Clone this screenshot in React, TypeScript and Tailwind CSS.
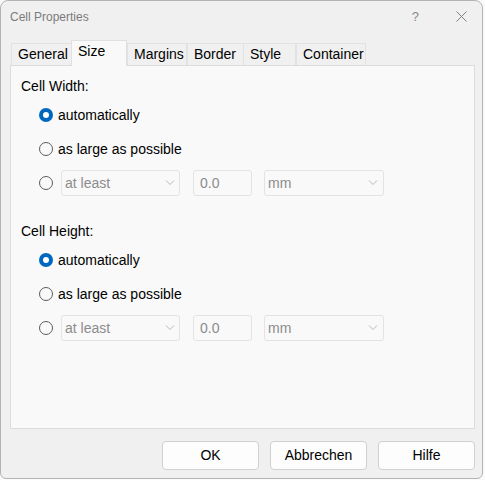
import { useState } from "react";

// Cell Properties dialog, "Size" tab

const tabs = [
  { name: "General", w: "w-[60px]" },
  { name: "Size", w: "w-[56px]" },
  { name: "Margins", w: "w-[60px]" },
  { name: "Border", w: "w-[56px]" },
  { name: "Style", w: "w-[53px]" },
  { name: "Container", w: "w-[70px]" },
];

function Radio({ checked, onClick }: { checked: boolean; onClick: () => void }) {
  return (
    <button
      onClick={onClick}
      className={`w-[14px] h-[14px] rounded-full shrink-0 flex items-center justify-center ${
        checked ? "bg-[#0067c0]" : "border border-[#5c5c5c] bg-[#f9f9f9]"
      }`}
    >
      {checked && <span className="w-[6px] h-[6px] rounded-full bg-white" />}
    </button>
  );
}

function Chevron() {
  return (
    <svg width="10" height="6" viewBox="0 0 10 6" fill="none" stroke="#b8b8b8" strokeWidth="1">
      <path d="M1 0.5 L5 4.5 L9 0.5" />
    </svg>
  );
}

function SizeGroup({ title }: { title: string }) {
  const [mode, setMode] = useState(0);
  return (
    <div className="flex flex-col">
      <div className="h-[20px] flex items-center pl-[10px] text-[14px] text-black">{title}</div>
      <div className="mt-[2px] flex flex-col pl-[28px]">
        <div className="h-[34px] flex items-center gap-[5px]">
          <Radio checked={mode === 0} onClick={() => setMode(0)} />
          <span>automatically</span>
        </div>
        <div className="h-[34px] flex items-center gap-[5px]">
          <Radio checked={mode === 1} onClick={() => setMode(1)} />
          <span>as large as possible</span>
        </div>
        <div className="h-[34px] flex items-center">
          <Radio checked={mode === 2} onClick={() => setMode(2)} />
          <div className="ml-[8px] w-[119px] h-[26px] border border-[#e3e3e3] rounded-[3px] bg-[#f9f9f9] flex items-center justify-between pl-[3px] pr-[4px] text-[#8c8c8c]">
            <span>at least</span>
            <Chevron />
          </div>
          <div className="ml-[13px] w-[59px] h-[26px] border border-[#e3e3e3] rounded-[3px] bg-[#f9f9f9] flex items-center pl-[6px] text-[#8c8c8c]">
            0.0
          </div>
          <div className="ml-[12px] w-[120px] h-[26px] border border-[#e3e3e3] rounded-[3px] bg-[#f9f9f9] flex items-center justify-between pl-[3px] pr-[5px] text-[#8c8c8c]">
            <span>mm</span>
            <Chevron />
          </div>
        </div>
      </div>
    </div>
  );
}

export default function App() {
  const [active, setActive] = useState("Size");

  return (
    <div className="w-[485px] h-[480px] bg-[#fafafa] font-['Liberation_Sans',Arial,sans-serif] text-[14px] text-black">
      <div className="w-[483px] h-[479px] rounded-t-[8px] rounded-b-[6px] border border-[#b4b4b4] bg-[#f0f0f0] flex flex-col">
        {/* Title bar */}
        <div className="h-[31px] flex items-center pl-[9px] text-[12px] text-[#7b7b7b]">
          <span>Cell Properties</span>
          <span className="ml-auto mr-[37px] text-[13px] text-[#8a8a8a]">?</span>
          <svg width="11" height="11" viewBox="0 0 11 11" stroke="#808080" strokeWidth="1" className="mr-[15px]">
            <path d="M0.5 0.5 L10.5 10.5 M10.5 0.5 L0.5 10.5" />
          </svg>
        </div>

        <div className="pl-[9px] pr-[7px] flex flex-col">
          {/* Tab strip */}
          <div className="mt-[8px] h-[25px] flex items-end pl-[1px]">
            {tabs.map((t) => {
              const sel = t.name === active;
              return (
                <button
                  key={t.name}
                  onClick={() => setActive(t.name)}
                  className={`${t.w} text-left pl-[6px] border border-b-0 relative ${
                    sel
                      ? "h-[26px] bg-[#f9f9f9] border-[#e0e0e0] z-10 -mb-px pb-[4px] flex items-start"
                      : "h-[22px] bg-[#f0f0f0] border-[#e2e2e2] flex items-center"
                  } ${t.name === "Border" ? "border-r-0" : ""} ${t.name === "General" ? "border-r-0" : ""}`}
                >
                  {t.name}
                </button>
              );
            })}
          </div>

          {/* Page */}
          <div className="h-[364px] border border-[#dcdcdc] bg-[#f9f9f9] flex flex-col pt-[10px]">
            <SizeGroup title="Cell Width:" />
            <div className="mt-[21px]">
              <SizeGroup title="Cell Height:" />
            </div>
          </div>

          {/* Buttons */}
          <div className="mt-[12px] flex justify-end gap-[11px]">
            {["OK", "Abbrechen", "Hilfe"].map((b) => (
              <button
                key={b}
                className="w-[97px] h-[29px] rounded-[4px] border border-[#d0d0d0] bg-[#fdfdfd] text-[14px]"
              >
                {b}
              </button>
            ))}
          </div>
        </div>
      </div>
    </div>
  );
}
